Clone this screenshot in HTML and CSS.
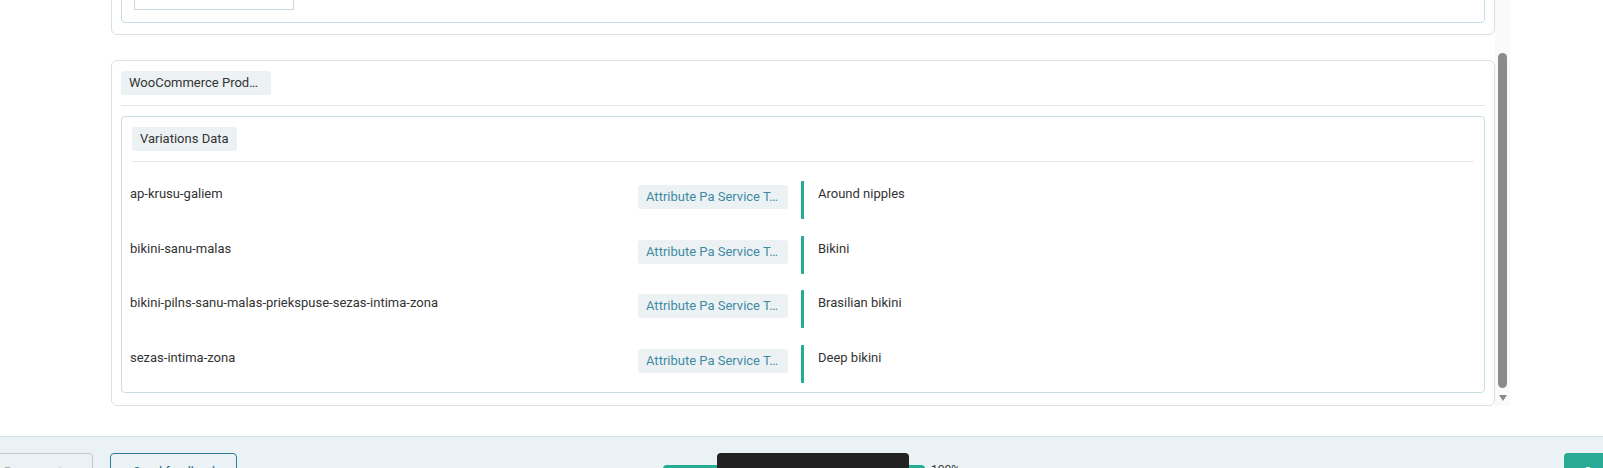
FILE: index.html
```html
<!DOCTYPE html>
<html lang="en">
<head>
    <meta charset="UTF-8">
    <meta name="viewport" content="width=device-width, initial-scale=1.0">
    <title>Product Data Preview</title>
    <link rel="stylesheet" href="styles.css">
</head>
<body>
    <div class="scroller">
        <div class="scroll-content">
            <section class="card card-prev">
                <div class="group">
                    <div class="field"></div>
                </div>
            </section>

            <section class="card">
                <span class="chip chip-title">WooCommerce Prod…</span>
                <div class="divider"></div>
                <div class="group">
                    <span class="chip">Variations Data</span>
                    <div class="divider"></div>
                    <div class="rows">
                        <div class="row">
                            <div class="row-name">ap-krusu-galiem</div>
                            <span class="chip chip-attr">Attribute Pa Service T…</span>
                            <div class="row-value">Around nipples</div>
                        </div>
                        <div class="row">
                            <div class="row-name">bikini-sanu-malas</div>
                            <span class="chip chip-attr">Attribute Pa Service T…</span>
                            <div class="row-value">Bikini</div>
                        </div>
                        <div class="row">
                            <div class="row-name">bikini-pilns-sanu-malas-priekspuse-sezas-intima-zona</div>
                            <span class="chip chip-attr">Attribute Pa Service T…</span>
                            <div class="row-value">Brasilian bikini</div>
                        </div>
                        <div class="row">
                            <div class="row-name">sezas-intima-zona</div>
                            <span class="chip chip-attr">Attribute Pa Service T…</span>
                            <div class="row-value">Deep bikini</div>
                        </div>
                    </div>
                </div>
            </section>
        </div>

        <div class="scrollbar">
            <div class="thumb"></div>
            <div class="arrow-down"></div>
        </div>
    </div>

    <footer class="footer">
        <div class="footer-left">
            <button class="btn btn-muted">Regenerate</button>
            <button class="btn btn-outline">Send feedback</button>
        </div>
        <div class="progress">
            <div class="progress-bar"></div>
            <span class="progress-label">100%</span>
            <div class="tooltip"></div>
        </div>
        <div class="footer-right">
            <button class="btn btn-primary">Save</button>
        </div>
    </footer>
</body>
</html>
```

FILE: styles.css
```css
* {
    margin: 0;
    padding: 0;
    box-sizing: border-box;
}

body {
    font-family: Roboto, 'Liberation Sans', sans-serif;
    font-size: 13px;
    color: #333;
    background: #fff;
    overflow: hidden;
    height: 468px;
}

.scroller {
    display: flex;
    width: 1510px;
    height: 406px;
    overflow: hidden;
}

.scroll-content {
    flex: 1;
    padding-left: 111px;
}

.card {
    border: 1px solid #dedede;
    border-radius: 6px;
    padding: 10px 9px 12px;
    margin-top: 25px;
    background: #fff;
}

.card-prev {
    height: 100px;
    margin-top: -65px;
    padding-bottom: 11px;
    display: flex;
    flex-direction: column;
    justify-content: flex-end;
}

.card-prev .group {
    padding: 12px;
    height: 80px;
    display: flex;
    flex-direction: column;
    justify-content: flex-end;
}

.field {
    width: 160px;
    height: 30px;
    border: 1px solid #c9d8de;
}

.group {
    border: 1px solid #c8dee5;
    border-radius: 4px;
    padding: 10px 10px 9px;
}

.card > .group {
    margin-top: 10px;
}

.chip {
    display: inline-block;
    height: 24px;
    line-height: 24px;
    padding: 0 8px;
    background: #ecf2f4;
    border-radius: 3px;
    white-space: nowrap;
    overflow: hidden;
    text-overflow: ellipsis;
    vertical-align: top;
}

.chip-title {
    width: 150px;
}

.divider {
    height: 1px;
    background: #e6e6e6;
    margin-top: 10px;
}

.rows {
    margin: 19px 0 0 -2px;
    display: flex;
    flex-direction: column;
    row-gap: 16.5px;
}

.row {
    display: flex;
    align-items: flex-start;
    min-height: 38px;
}

.row-name {
    width: 508px;
    line-height: 18px;
    padding-top: 4px;
}

.chip-attr {
    width: 150px;
    margin-top: 4px;
    color: #3f8aa3;
}

.row-value {
    margin-left: 13px;
    border-left: 3px solid #26ab94;
    border-radius: 1px;
    height: 38px;
    padding: 4px 0 0 14px;
    line-height: 18px;
}

.scrollbar {
    width: 15px;
    background: #fafafa;
    display: flex;
    flex-direction: column;
    align-items: center;
}

.thumb {
    width: 9px;
    height: 335px;
    margin-top: 53px;
    background: #8b8b8b;
    border-radius: 5px;
}

.arrow-down {
    margin-top: 7px;
    width: 0;
    height: 0;
    border-left: 4px solid transparent;
    border-right: 4px solid transparent;
    border-top: 6px solid #8b8b8b;
}

.footer {
    margin-top: 30px;
    height: 80px;
    border-top: 1px solid #cfe1e7;
    background: #eaf2f5;
    padding-top: 16px;
    display: grid;
    grid-template-columns: 1fr auto 1fr;
    align-items: start;
}

.footer-left {
    display: flex;
    gap: 17px;
    margin-left: -20px;
}

.btn {
    height: 36px;
    border-radius: 4px;
    font-family: inherit;
    font-size: 13px;
    background: transparent;
    padding: 0 12px;
    white-space: nowrap;
}

.btn-muted {
    width: 113px;
    border: 1px solid #c8c8c8;
    color: #a8a8a8;
}

.btn-outline {
    width: 127px;
    border: 1px solid #2e7f97;
    color: #2e6f86;
    text-align: left;
    padding-left: 22px;
}

.progress {
    position: relative;
    display: flex;
    align-items: flex-start;
    gap: 6px;
    margin-left: 20px;
    padding-top: 12px;
}

.progress-bar {
    width: 262px;
    height: 8px;
    border-radius: 4px;
    background: #26ab94;
}

.progress-label {
    font-size: 12px;
    line-height: 12px;
    margin-top: -1px;
}

.tooltip {
    position: absolute;
    left: 54px;
    top: 0;
    width: 192px;
    height: 40px;
    background: #222;
    border-radius: 4px;
}

.footer-right {
    display: flex;
    justify-content: flex-end;
}

.btn-primary {
    width: 80px;
    margin-right: -41px;
    border: none;
    background: #27ab94;
    color: #fff;
    text-align: left;
    padding-left: 20px;
}
```
